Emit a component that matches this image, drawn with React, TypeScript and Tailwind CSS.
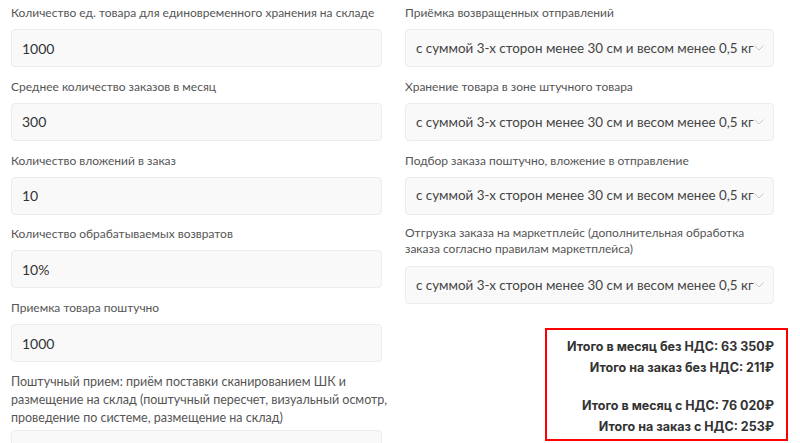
import React from 'react';

const LEFT = [
  { label: 'Количество ед. товара для единовременного хранения на складе', value: '1000' },
  { label: 'Среднее количество заказов в месяц', value: '300' },
  { label: 'Количество вложений в заказ', value: '10' },
  { label: 'Количество обрабатываемых возвратов', value: '10%' },
  { label: 'Приемка товара поштучно', value: '1000' },
];

const RIGHT = [
  'Приёмка возвращенных отправлений',
  'Хранение товара в зоне штучного товара',
  'Подбор заказа поштучно, вложение в отправление',
  'Отгрузка заказа на маркетплейс (дополнительная обработка заказа согласно правилам маркетплейса)',
];

const OPTION = 'с суммой 3-х сторон менее 30 см и весом менее 0,5 кг';

function Chevron() {
  return (
    <svg width="10" height="6" viewBox="0 0 10 6" className="shrink-0">
      <polyline points="0.5,0.5 5,5 9.5,0.5" fill="none" stroke="#c8c8c8" strokeWidth="1" />
    </svg>
  );
}

export default function App() {
  return (
    <div className="w-[800px] h-[443px] overflow-hidden bg-white font-['Lato',sans-serif]">
      <div className="grid grid-cols-[371px_369px] gap-x-[23px] pl-[11px] pt-[4px]">
        {/* left column */}
        <div className="flex flex-col">
          {LEFT.map((f) => (
            <div key={f.label} className="flex flex-col mb-[10.75px]">
              <label className="text-[12px] leading-[18px] text-[#555] mb-[7px] whitespace-nowrap">{f.label}</label>
              <div className="h-[38px] rounded bg-[#f9f9f9] border border-[#ececec] px-[10px] flex items-center text-[14px] text-[#333]">
                {f.value}
              </div>
            </div>
          ))}
          <div className="flex flex-col">
            <label className="text-[12.5px] leading-[18px] text-[#555] mb-[3px] whitespace-nowrap">
              Поштучный прием: приём поставки сканированием ШК и
              <br />
              размещение на склад (поштучный пересчет, визуальный осмотр,
              <br />
              проведение по системе, размещение на склад)
            </label>
            <div className="h-[38px] rounded bg-[#f9f9f9] border border-[#ececec]" />
          </div>
        </div>

        {/* right column */}
        <div className="flex flex-col">
          {RIGHT.map((l, i) => (
            <div key={l} className="flex flex-col mb-[10.75px]">
              <label
                className={`text-[12px] text-[#555] ${
                  i === 3 ? 'leading-[16px] pr-[20px] mb-[9px]' : 'leading-[18px] mb-[7px]'
                }`}
              >
                {l}
              </label>
              <div className="h-[38px] rounded bg-[#f9f9f9] border border-[#ececec] pl-[10px] pr-[9px] flex items-center justify-between text-[13.4px] text-[#444]">
                <span className="whitespace-nowrap">{OPTION}</span>
                <Chevron />
              </div>
            </div>
          ))}

          <div className="self-end mr-[-14px] mt-[13px] w-[243px] border-2 border-[#ff0000] pt-[6px] pb-[2px] pr-[12px] text-right font-['Inter',sans-serif] font-bold text-[12.5px] text-[#333]">
            <p className="leading-[21px]">Итого в месяц без НДС: 63 350₽</p>
            <p className="leading-[21px]">Итого на заказ без НДС: 211₽</p>
            <p className="leading-[21px] mt-[17px]">Итого в месяц с НДС: 76 020₽</p>
            <p className="leading-[21px]">Итого на заказ с НДС: 253₽</p>
          </div>
        </div>
      </div>
    </div>
  );
}
